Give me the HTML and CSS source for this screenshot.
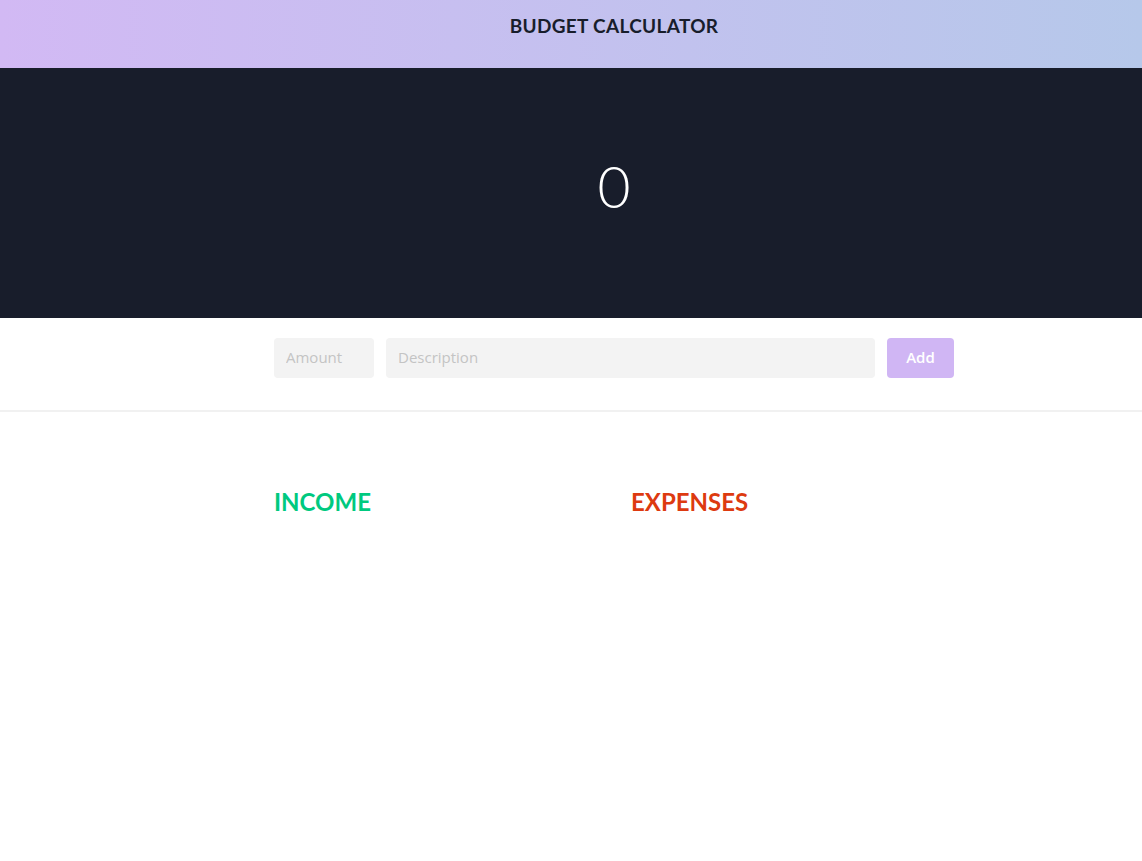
FILE: index.html
```html
<!DOCTYPE html>
<html lang="en">
<head>
<meta charset="utf-8">
<title>Budget Calculator</title>
<link rel="stylesheet" href="styles.css">
</head>
<body>
  <header class="topbar">
    <div class="centered">
      <h1 class="title">BUDGET CALCULATOR</h1>
    </div>
  </header>
  <section class="balance">
    <div class="centered">
      <div class="total">0</div>
    </div>
  </section>
  <section class="entry">
    <div class="centered">
      <form class="entry-form">
        <input class="field amount" type="text" placeholder="Amount">
        <input class="field desc" type="text" placeholder="Description">
        <button class="add-btn" type="button">Add</button>
      </form>
    </div>
  </section>
  <main class="lists">
    <div class="centered">
      <div class="columns">
        <div class="col">
          <h2 class="col-title income">INCOME</h2>
        </div>
        <div class="col">
          <h2 class="col-title expenses">EXPENSES</h2>
        </div>
      </div>
    </div>
  </main>
</body>
</html>
```

FILE: styles.css
```css
* { box-sizing: border-box; }
html, body { margin: 0; padding: 0; }
body {
  font-family: Lato, "Open Sans", sans-serif;
  background: #fff;
  color: #181d2b;
}
.centered {
  padding-left: 86px;
  display: flex;
  justify-content: center;
}
.topbar {
  height: 68px;
  background: linear-gradient(90deg, #d2b9f4 0%, #b6c8ea 100%);
}
.topbar .centered { height: 100%; align-items: center; }
.title {
  margin: 0;
  margin-top: -18px;
  font-size: 19px;
  font-weight: 700;
  letter-spacing: 0.32px;
  color: #181d2b;
}
.balance {
  height: 250px;
  background: #181d2b;
}
.balance .centered { height: 100%; align-items: center; }
.total {
  color: #fff;
  font-size: 57px;
  font-weight: 300;
  margin-top: -14px;
}
.entry {
  padding: 20px 0 32px;
  border-bottom: 2px solid #f1f1f1;
}
.entry-form {
  width: 680px;
  display: flex;
  gap: 12px;
}
.field {
  height: 40px;
  border: none;
  border-radius: 4px;
  background: #f3f3f3;
  font-family: "Open Sans", Lato, sans-serif;
  font-size: 15px;
  padding: 0 11px 2px 12px;
  color: #333;
  outline: none;
}
.field::placeholder { color: #c4c4c4; }
.amount { width: 100px; }
.desc { flex: 1; }
.add-btn {
  width: 67px;
  height: 40px;
  border: none;
  border-radius: 4px;
  background: #d0b6f4;
  color: #fff;
  font-family: "Open Sans", Lato, sans-serif;
  font-size: 15px;
  font-weight: 600;
  padding: 0 0 2px;
}
.lists { padding-top: 75px; }
.columns {
  width: 680px;
  display: grid;
  grid-template-columns: 1fr 1fr;
  column-gap: 34px;
}
.col-title {
  margin: 0;
  font-size: 24px;
  font-weight: 700;
}
.income { color: #00c97f; }
.expenses { color: #dd3a10; }
```
